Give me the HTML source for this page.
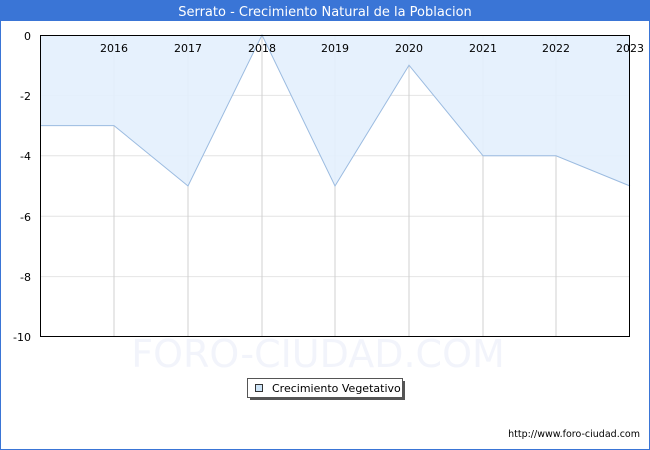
<!DOCTYPE html>
<html><head><style>body{margin:0;background:#fff}svg{display:block}</style></head><body>
<svg width="650" height="450" xmlns="http://www.w3.org/2000/svg" font-family="'DejaVu Sans','Liberation Sans',sans-serif">
<rect x="0.5" y="0.5" width="649" height="449" fill="#fff" stroke="#3a75d6"/>
<rect x="0" y="0" width="650" height="21" fill="#3a75d6"/>
<text x="325" y="16" fill="#fff" font-size="13" text-anchor="middle">Serrato - Crecimiento Natural de la Poblacion</text>
<text x="318" y="367" fill="#f2f4fb" font-size="38" text-anchor="middle">FORO-CIUDAD.COM</text>
<g stroke="#e4e4e4" stroke-width="1">
<line x1="40" y1="95.4" x2="630" y2="95.4"/><line x1="40" y1="155.8" x2="630" y2="155.8"/><line x1="40" y1="216.2" x2="630" y2="216.2"/><line x1="40" y1="276.6" x2="630" y2="276.6"/>
</g>
<g stroke="#d0d0d0" stroke-width="1">
<line x1="114" y1="35" x2="114" y2="337"/><line x1="188" y1="35" x2="188" y2="337"/><line x1="262" y1="35" x2="262" y2="337"/><line x1="335" y1="35" x2="335" y2="337"/><line x1="409" y1="35" x2="409" y2="337"/><line x1="483" y1="35" x2="483" y2="337"/><line x1="556" y1="35" x2="556" y2="337"/>
</g>
<polygon points="40,35 40,125.6 114,125.6 188,186 262,35 335,186 409,65.2 483,155.8 556,155.8 630,186 630,35" fill="#e3f0fd" fill-opacity="0.9"/>
<polyline points="40,125.6 114,125.6 188,186 262,35 335,186 409,65.2 483,155.8 556,155.8 630,186" fill="none" stroke="#9bbbe0" stroke-width="1"/>
<rect x="40.5" y="35.5" width="589" height="301" fill="none" stroke="#000"/>
<g font-size="11" fill="#000">
<text x="31" y="40" text-anchor="end">0</text><text x="31" y="100" text-anchor="end">-2</text><text x="31" y="160" text-anchor="end">-4</text><text x="31" y="221" text-anchor="end">-6</text><text x="31" y="281" text-anchor="end">-8</text><text x="31" y="341" text-anchor="end">-10</text>
<g text-anchor="middle"><text x="114" y="52">2016</text><text x="188" y="52">2017</text><text x="262" y="52">2018</text><text x="335" y="52">2019</text><text x="409" y="52">2020</text><text x="483" y="52">2021</text><text x="556" y="52">2022</text><text x="630" y="52">2023</text></g>
</g>
<rect x="250" y="381" width="155" height="19" fill="#555"/>
<rect x="247.5" y="378.5" width="155" height="19" fill="#fff" stroke="#555"/>
<rect x="255.5" y="384.5" width="7" height="7" fill="#cde4f7" stroke="#333"/>
<text x="272" y="392" font-size="11">Crecimiento Vegetativo</text>
<text x="640" y="437" font-size="9.5" text-anchor="end">http://www.foro-ciudad.com</text>
</svg>
</body></html>
